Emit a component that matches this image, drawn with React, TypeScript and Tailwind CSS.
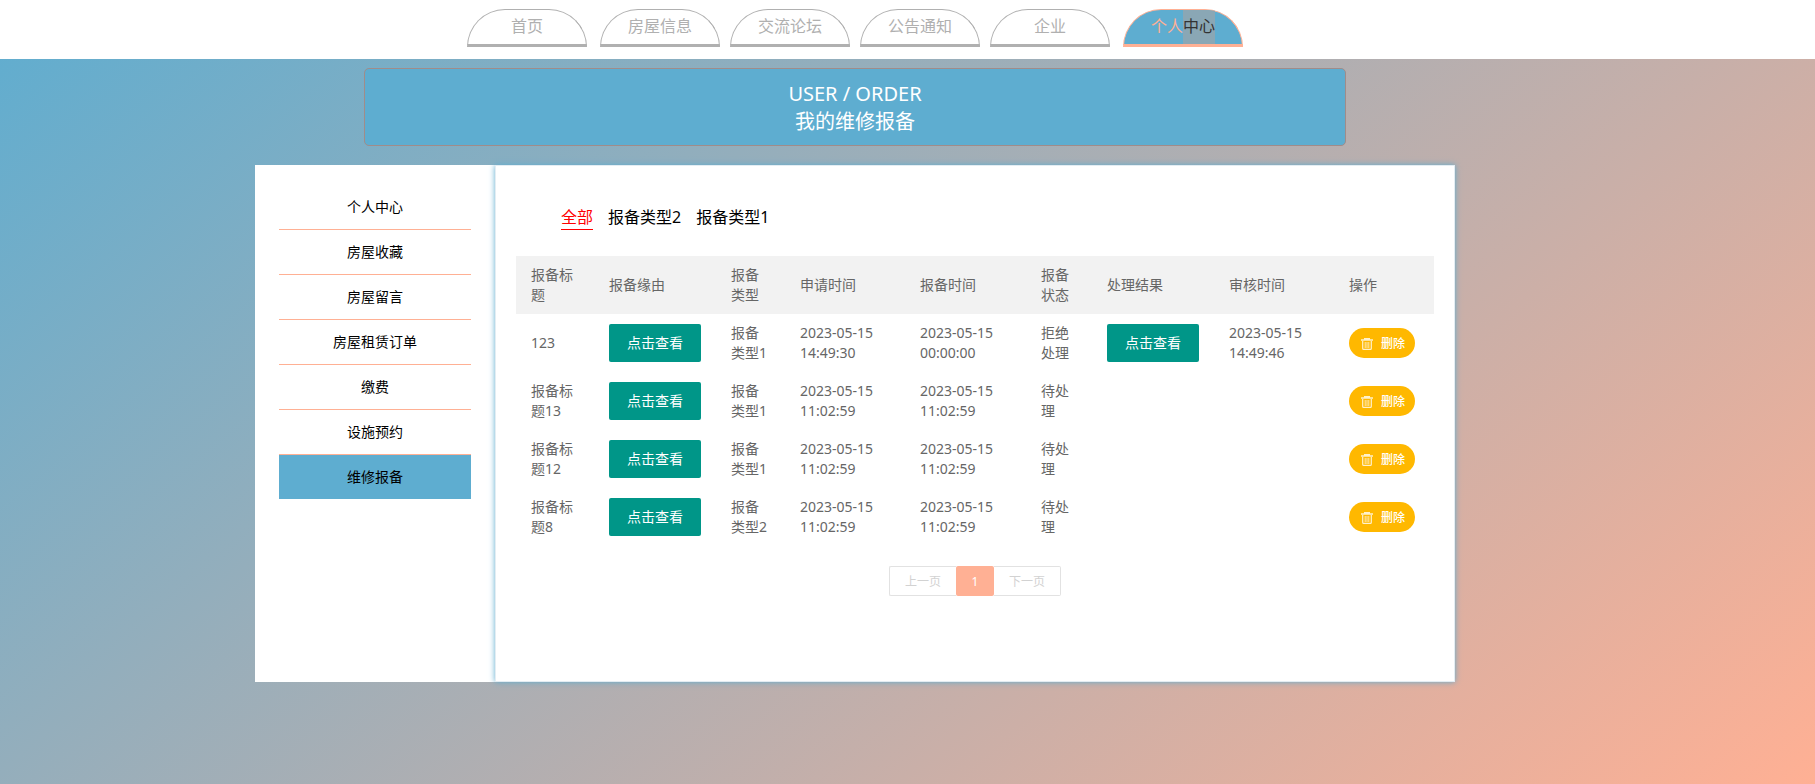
import { Fragment } from "react";

const navItems = ["首页", "房屋信息", "交流论坛", "公告通知", "企业"];

const sideItems = ["个人中心", "房屋收藏", "房屋留言", "房屋租赁订单", "缴费", "设施预约"];

const columns = [
  { label: "报备标题", width: "w-[78px]" },
  { label: "报备缘由", width: "w-[122px]" },
  { label: "报备类型", width: "w-[69px]" },
  { label: "申请时间", width: "w-[120px]" },
  { label: "报备时间", width: "w-[121px]" },
  { label: "报备状态", width: "w-[66px]" },
  { label: "处理结果", width: "w-[122px]" },
  { label: "审核时间", width: "w-[120px]" },
  { label: "操作", width: "w-[100px]" },
];

type Report = {
  title: string;
  type: string;
  applied: [string, string];
  reported: [string, string];
  status: string;
  hasResult: boolean;
  reviewed?: [string, string];
};

const reports: Report[] = [
  {
    title: "123",
    type: "报备类型1",
    applied: ["2023-05-15", "14:49:30"],
    reported: ["2023-05-15", "00:00:00"],
    status: "拒绝处理",
    hasResult: true,
    reviewed: ["2023-05-15", "14:49:46"],
  },
  {
    title: "报备标题13",
    type: "报备类型1",
    applied: ["2023-05-15", "11:02:59"],
    reported: ["2023-05-15", "11:02:59"],
    status: "待处理",
    hasResult: false,
  },
  {
    title: "报备标题12",
    type: "报备类型1",
    applied: ["2023-05-15", "11:02:59"],
    reported: ["2023-05-15", "11:02:59"],
    status: "待处理",
    hasResult: false,
  },
  {
    title: "报备标题8",
    type: "报备类型2",
    applied: ["2023-05-15", "11:02:59"],
    reported: ["2023-05-15", "11:02:59"],
    status: "待处理",
    hasResult: false,
  },
];

function TrashIcon() {
  return (
    <svg viewBox="0 0 12 12" className="h-3 w-3" fill="none" stroke="currentColor" aria-hidden="true">
      <path d="M0 2h12M3 .8h6" strokeWidth="1.6" opacity="0.8" />
      <path d="M1.7 3v7.4c0 .6.4 1 1 1h6.6c.6 0 1-.4 1-1V3" strokeWidth="1.2" opacity="0.8" />
      <path d="M4.2 4v6M6 4v6M7.8 4v6" strokeWidth="1" opacity="0.7" />
    </svg>
  );
}

function ViewButton() {
  return (
    <button type="button" className="block h-[38px] w-[92px] rounded-xs bg-[#009688] text-sm whitespace-nowrap text-white">
      点击查看
    </button>
  );
}

function DateTime({ value }: { value?: [string, string] }) {
  if (!value) return null;
  return (
    <Fragment>
      {value[0]}
      <br />
      {value[1]}
    </Fragment>
  );
}

export default function App() {
  return (
    <div className="flex min-h-screen flex-col bg-[linear-gradient(140deg,#5eadd0,#ffb094)] font-['Noto_Sans','Noto_Sans_CJK_SC',sans-serif] text-black">
      <header className="h-[59px] bg-white pt-[9px] pr-[105px]">
        <nav className="flex justify-center gap-[10px] text-base">
          {navItems.map((item) => (
            <a
              key={item}
              href="#"
              className="h-[38px] w-[120px] rounded-t-[40px] border border-b-[3px] border-[#b0b0b0] text-center leading-8 text-[#b0b0b0] first:mr-[3px]"
            >
              {item}
            </a>
          ))}
          <a
            href="#"
            aria-current="page"
            className="ml-[3px] h-[38px] w-[120px] overflow-hidden rounded-t-[40px] border border-b-[3px] border-[#ffb094] bg-[#5eadd0] text-center text-[#ffb094]"
          >
            <span className="flex h-full justify-center leading-8">
              个人<span className="bg-[#8aa7b5] text-[#333333]">中心</span>
            </span>
          </a>
        </nav>
      </header>

      <main className="flex flex-col items-center pt-[9px] pr-[105px] pb-10">
        <h1 className="flex h-[78px] w-full max-w-[982px] flex-col items-center justify-center rounded-[5px] border border-[#a08c8a] bg-[#5eadd0] pt-0.5 text-xl leading-7 text-white">
          <span>USER / ORDER</span>
          <span>我的维修报备</span>
        </h1>

        <div className="mt-[19px] flex w-full max-w-[1200px]">
          <aside className="w-[240px] shrink-0 bg-white px-6 pt-5">
            <ul className="text-center text-sm leading-[44px]">
              {sideItems.map((item) => (
                <li key={item} className="border-b border-[#ffb094]">
                  <a href="#" className="block">
                    {item}
                  </a>
                </li>
              ))}
              <li>
                <a href="#" aria-current="page" className="block bg-[#5eadd0]">
                  维修报备
                </a>
              </li>
            </ul>
          </aside>

          <section className="relative min-w-0 flex-1 border border-[#e3edf3] bg-white px-5 pt-[39px] pb-[85px] shadow-[0_0_6px_#5eadd0]">
            <div className="flex gap-[15px] pl-[45px] text-base leading-6">
              <a href="#" className="border-b border-[red] text-[red]">
                全部
              </a>
              <a href="#">报备类型2</a>
              <a href="#">报备类型1</a>
            </div>

            <table className="mt-[26px] w-full table-fixed text-left text-sm leading-5 text-[#666666]">
              <thead className="bg-[#f2f2f2]">
                <tr className="h-[58px]">
                  {columns.map((column) => (
                    <th key={column.label} scope="col" className={`${column.width} px-[15px] py-[9px] font-normal`}>
                      {column.label}
                    </th>
                  ))}
                </tr>
              </thead>
              <tbody>
                {reports.map((report) => (
                  <tr key={report.title} className="h-[58px] [&>td]:px-[15px] [&>td]:py-[9px]">
                    <td>{report.title}</td>
                    <td>
                      <ViewButton />
                    </td>
                    <td>
                      {report.type.slice(0, 2)}
                      <br />
                      <span className="whitespace-nowrap">{report.type.slice(2)}</span>
                    </td>
                    <td>
                      <DateTime value={report.applied} />
                    </td>
                    <td>
                      <DateTime value={report.reported} />
                    </td>
                    <td>{report.status}</td>
                    <td>{report.hasResult && <ViewButton />}</td>
                    <td>
                      <DateTime value={report.reviewed} />
                    </td>
                    <td>
                      <button
                        type="button"
                        className="flex h-[30px] w-[66px] items-center gap-2 rounded-full bg-[#ffb800] pt-px pl-3 text-xs font-medium whitespace-nowrap text-white"
                      >
                        <TrashIcon />
                        删除
                      </button>
                    </td>
                  </tr>
                ))}
              </tbody>
            </table>

            <nav aria-label="分页" className="mt-5 flex justify-center text-xs">
              <button type="button" disabled className="h-[30px] w-[67px] rounded-l-xs border border-r-0 border-[#e2e2e2] pt-0.5 text-[#d2d2d2]">
                上一页
              </button>
              <button type="button" aria-current="page" className="h-[30px] w-[38px] rounded-xs bg-[#ffb094] pt-0.5 text-white">
                1
              </button>
              <button type="button" disabled className="h-[30px] w-[67px] rounded-r-xs border border-l-0 border-[#e2e2e2] pt-0.5 text-[#d2d2d2]">
                下一页
              </button>
            </nav>
          </section>
        </div>
      </main>
    </div>
  );
}
